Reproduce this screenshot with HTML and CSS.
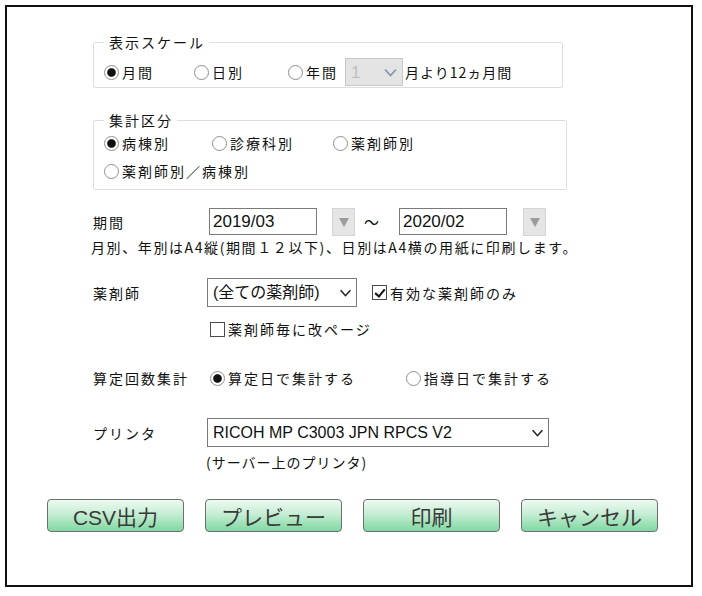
FILE: index.html
```html
<!DOCTYPE html>
<html lang="ja">

<head>
    <meta charset="UTF-8">
    <meta name="viewport" content="width=device-width, initial-scale=1.0">
    <title>印刷設定</title>
    <link rel="stylesheet" href="styles.css">
</head>

<body>
    <div class="frame">
        <div class="form">
            <fieldset class="group group-scale">
                <legend>表示スケール</legend>
                <div class="options options-scale">
                    <label class="opt"><input type="radio" name="scale" checked>月間</label>
                    <label class="opt"><input type="radio" name="scale">日別</label>
                    <div class="opt">
                        <label class="opt"><input type="radio" name="scale">年間</label>
                        <div class="select select-month is-disabled">
                            <select disabled>
                                <option>1</option>
                            </select>
                            <svg class="chevron" viewBox="0 0 14 9"><path d="M1.5 1.5 7 7.5 12.5 1.5" /></svg>
                        </div>
                        <span class="suffix">月より12ヵ月間</span>
                    </div>
                </div>
            </fieldset>

            <fieldset class="group group-kind">
                <legend>集計区分</legend>
                <div class="options options-kind">
                    <label class="opt"><input type="radio" name="kind" checked>病棟別</label>
                    <label class="opt"><input type="radio" name="kind">診療科別</label>
                    <label class="opt"><input type="radio" name="kind">薬剤師別</label>
                    <label class="opt"><input type="radio" name="kind">薬剤師別／病棟別</label>
                </div>
            </fieldset>

            <!-- 期間 -->
            <div class="field field-period">
                <span class="field-label">期間</span>
                <input class="date" type="text" value="2019/03">
                <button class="pick" type="button"><svg viewBox="0 0 10 9"><polygon points="0,0 10,0 5,9" /></svg></button>
                <span class="tilde">～</span>
                <input class="date date-to" type="text" value="2020/02">
                <button class="pick" type="button"><svg viewBox="0 0 10 9"><polygon points="0,0 10,0 5,9" /></svg></button>
            </div>
            <p class="note">月別、年別はA4縦(期間１２以下)、日別はA4横の用紙に印刷します。</p>

            <!-- 薬剤師 -->
            <div class="field field-select">
                <span class="field-label">薬剤師</span>
                <div class="select select-staff">
                    <select>
                        <option>(全ての薬剤師)</option>
                    </select>
                    <svg class="chevron" viewBox="0 0 14 9"><path d="M1.5 1.5 7 7.5 12.5 1.5" /></svg>
                </div>
                <label class="opt check-valid"><input type="checkbox" checked>有効な薬剤師のみ</label>
            </div>
            <div class="field field-check">
                <label class="opt"><input type="checkbox">薬剤師毎に改ページ</label>
            </div>

            <!-- 算定回数集計 -->
            <div class="field field-count">
                <span class="field-label">算定回数集計</span>
                <label class="opt count-opt"><input type="radio" name="count" checked>算定日で集計する</label>
                <label class="opt"><input type="radio" name="count">指導日で集計する</label>
            </div>

            <!-- プリンタ -->
            <div class="field field-select field-printer">
                <span class="field-label">プリンタ</span>
                <div class="select select-printer">
                    <select>
                        <option>RICOH MP C3003 JPN RPCS V2</option>
                    </select>
                    <svg class="chevron" viewBox="0 0 14 9"><path d="M1.5 1.5 7 7.5 12.5 1.5" /></svg>
                </div>
            </div>
            <p class="note note-printer">(サーバー上のプリンタ)</p>
        </div>

        <div class="actions">
            <button class="action" type="button">CSV出力</button>
            <button class="action" type="button">プレビュー</button>
            <button class="action" type="button">印刷</button>
            <button class="action" type="button">キャンセル</button>
        </div>
    </div>
</body>

</html>
```

FILE: styles.css
```css
* {
    box-sizing: border-box;
}

body {
    margin: 0;
    background: #fff;
    color: #111;
    font-family: "Noto Sans CJK JP", sans-serif;
    font-size: 14px;
    line-height: 16px;
    letter-spacing: 2px;
}

.frame {
    width: 688px;
    height: 582px;
    margin: 5px;
    padding-top: 27px;
    border: 2px solid #111;
}

.form {
    margin-left: 86px;
}

/* fieldsets */
.group {
    margin: 0;
    padding: 0 0 3px 10px;
    border: 1px solid #dedede;
    border-radius: 2px;
    min-width: 0;
}

.group legend {
    padding: 0 4px 0 5px;
    line-height: 16px;
}

.group-scale {
    width: 470px;
}

.group-kind {
    width: 474px;
    margin-top: 24px;
    padding-bottom: 6px;
}

.options {
    display: grid;
    align-items: center;
}

.options-scale {
    grid-template-columns: 90px 94px auto;
    height: 26px;
    margin-top: 8px;
}

.options-kind {
    grid-template-columns: 108px 121px auto;
    grid-auto-rows: 24px;
    row-gap: 4px;
    margin-top: 3px;
}

.opt {
    display: flex;
    align-items: center;
    white-space: nowrap;
}

.suffix {
    letter-spacing: 1px;
}

/* radio / checkbox */
input[type="radio"],
input[type="checkbox"] {
    appearance: none;
    flex: none;
    width: 15px;
    height: 15px;
    margin: 0 3px 0 0;
    background: #fff;
}

input[type="radio"] {
    border: 1px solid #8f8f8f;
    border-radius: 50%;
}

input[type="radio"]:checked {
    background: radial-gradient(circle, #111 0 3.8px, #fff 4.8px);
}

input[type="checkbox"] {
    position: relative;
    border: 1px solid #4a4a4a;
}

input[type="checkbox"]:checked::after {
    content: "";
    position: absolute;
    left: 4px;
    top: 1px;
    width: 4px;
    height: 8px;
    border: solid #111;
    border-width: 0 2px 2px 0;
    transform: rotate(40deg);
}

/* select boxes */
.select {
    display: flex;
    align-items: center;
    height: 29px;
    padding-right: 4px;
    border: 1px solid #7a7a7a;
    background: #fff;
}

.select select {
    appearance: none;
    flex: 1;
    min-width: 0;
    height: 100%;
    padding: 0 0 0 5px;
    border: 0;
    outline: none;
    background: transparent;
    color: #111;
    font: 16px "Liberation Sans", "Noto Sans CJK JP", sans-serif;
    letter-spacing: 0;
}

.chevron {
    width: 13px;
    height: 8px;
    fill: none;
    stroke: #222;
    stroke-width: 1.8;
}

.select-month {
    width: 58px;
    height: 28px;
    margin: 0 2px 0 7px;
    border-color: #c9c9c9;
    background: #e4e4e4;
}

.select-month select {
    color: #b0b0b0;
    font-size: 17px;
}

.select-month .chevron {
    width: 15px;
    height: 9px;
    stroke: #8496ad;
}

.select-staff {
    width: 150px;
}

.select-printer {
    width: 342px;
}

/* rows */
.field {
    display: flex;
    align-items: center;
}

.field-label {
    flex: none;
    width: 114px;
}

.field-period {
    height: 28px;
    margin-top: 18px;
    align-items: flex-start;
}

.field-period .field-label {
    align-self: center;
}

.date {
    width: 108px;
    height: 27px;
    margin-left: 2px;
    padding: 0 0 0 3px;
    border: 1px solid #7a7a7a;
    color: #111;
    font: 17px "Liberation Sans", sans-serif;
    letter-spacing: 0;
}

.date-to {
    margin-left: 0;
}

.pick {
    display: flex;
    align-items: center;
    justify-content: center;
    width: 23px;
    height: 28px;
    margin-left: 15px;
    padding: 0;
    border: 1px solid #d4d4d4;
    background: #e5e5e5;
}

.pick + .date {
    margin-left: 0;
}

.date-to + .pick {
    margin-left: 16px;
}

.pick svg {
    width: 10px;
    height: 9px;
    fill: #9c9c9c;
}

.tilde {
    width: 44px;
    padding-left: 9px;
    align-self: center;
    letter-spacing: 0;
    font-size: 15px;
}

.note {
    margin: 3px 0 0 -2px;
    letter-spacing: 1.6px;
}

.field-select {
    height: 29px;
    margin-top: 23px;
}

.check-valid {
    margin-left: 15px;
}

.field-check {
    height: 20px;
    margin-top: 12px;
    padding-left: 117px;
}

.field-count {
    height: 20px;
    margin-top: 29px;
}

.count-opt {
    width: 196px;
    margin-left: 3px;
}

.field-printer {
    margin-top: 30px;
}

.note-printer {
    margin: 7px 0 0;
    padding-left: 113px;
    letter-spacing: 1px;
}

/* buttons */
.actions {
    display: flex;
    gap: 21px;
    margin: 29px 0 0 40px;
}

.action {
    width: 137px;
    height: 33px;
    padding: 0;
    border: 1px solid #6f6f6f;
    border-radius: 4px;
    background: linear-gradient(to bottom, #eefaf2 0%, #c6edd4 45%, #7fd8a1 100%);
    color: #3a3a3a;
    font: 400 21px "Liberation Sans", "Noto Sans CJK JP", sans-serif;
    letter-spacing: 0;
}
```
